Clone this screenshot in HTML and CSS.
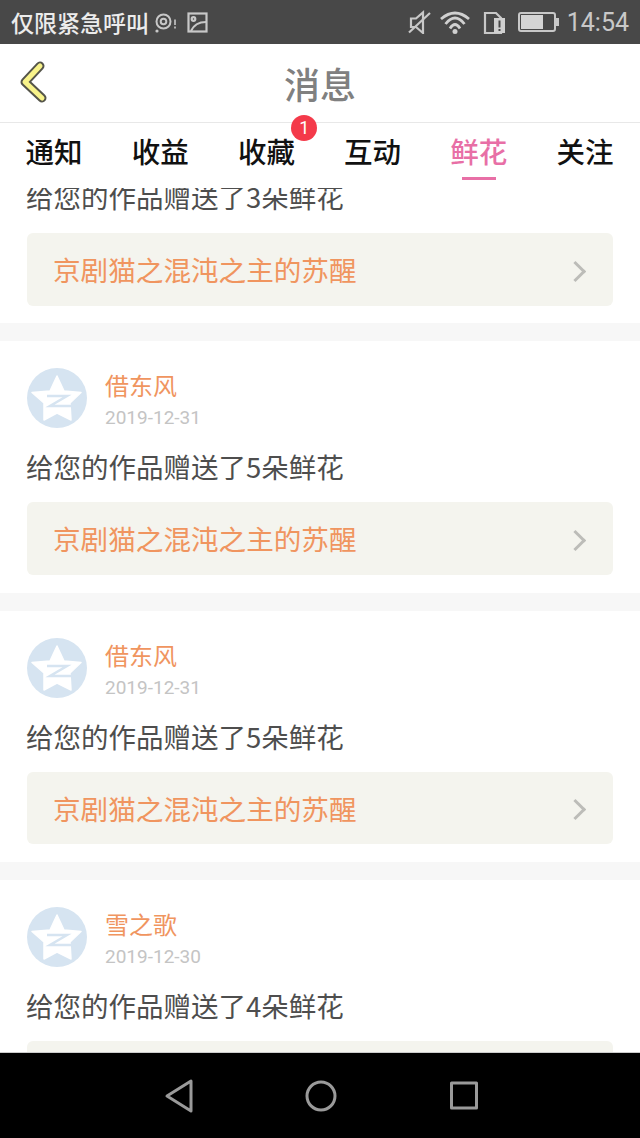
FILE: index.html
```html
<!DOCTYPE html>
<html lang="zh-CN">
<head>
    <meta charset="UTF-8">
    <meta name="viewport" content="width=device-width, initial-scale=1.0">
    <title>消息</title>
    <link rel="stylesheet" href="styles.css">
</head>
<body>
    <div class="app">
        <div class="status-bar">
            <div class="status-left">
                <span class="carrier">仅限紧急呼叫</span>
                <svg class="icon-nfc" width="24" height="24" viewBox="0 0 24 24" fill="none" stroke="#c8c8c8" stroke-width="2">
                    <circle cx="8.5" cy="11.500" r="7"/>
                    <circle cx="8.5" cy="11.500" r="2.800"/>
                    <path d="M20 9.500v5.500M20 16.500v2" stroke-width="1.600"/>
                    <circle cx="2" cy="21" r="1.600" fill="#c8c8c8" stroke="none"/>
                </svg>
                <svg class="icon-photo" width="21" height="21" viewBox="0 0 21 21" fill="none" stroke="#c8c8c8" stroke-width="2.200">
                    <rect x="1.500" y="1.500" width="18" height="18"/>
                    <path d="M4 19 Q8 10 19 10"/>
                    <circle cx="6.500" cy="7" r="1.800"/>
                </svg>
            </div>
            <div class="status-right">
                <svg class="icon-mute" width="24" height="24" viewBox="0 0 24 24" fill="none" stroke="#c8c8c8" stroke-width="2.200">
                    <path d="M1 22.500 L22 3"/>
                    <path d="M3 8.500 H8 L15 2.500 V23 L8 17 H3 Z"/>
                </svg>
                <svg class="icon-wifi" width="30" height="24" viewBox="0 0 30 24" fill="none" stroke="#d0d0d0" stroke-width="2.800">
                    <path d="M1 9 Q15 -3 29 9"/>
                    <path d="M5.500 14 Q15 2 24.500 14"/>
                    <path d="M10 18.500 Q15 10.500 20 18.500"/>
                    <circle cx="15" cy="21.500" r="2.500" fill="#d0d0d0" stroke="none"/>
                </svg>
                <svg class="icon-sim" width="24" height="24" viewBox="0 0 24 24">
                    <path d="M2 3h11l5 5v15H2z" fill="none" stroke="#c8c8c8" stroke-width="2.200"/>
                    <rect x="11" y="8" width="11" height="15" fill="#d0d0d0"/>
                    <rect x="15.500" y="10.500" width="2" height="7" fill="#484848"/>
                    <rect x="15.500" y="19" width="2" height="2" fill="#484848"/>
                </svg>
                <div class="battery"><div class="battery-level"></div></div>
                <span class="clock">14:54</span>
            </div>
        </div>

        <div class="header">
            <svg class="back" width="32" height="50" viewBox="0 0 32 50" fill="none" stroke-linecap="round" stroke-linejoin="round">
                <path d="M23 8 L8 24 L25 40" stroke="#55554a" stroke-width="9"/>
                <path d="M23 8 L8 24 L25 40" stroke="#f8f38a" stroke-width="5"/>
            </svg>
            <h1>消息</h1>
        </div>

        <div class="tabs">
            <div class="tab">通知</div>
            <div class="tab">收益</div>
            <div class="tab">收藏<span class="badge">1</span></div>
            <div class="tab">互动</div>
            <div class="tab active">鲜花</div>
            <div class="tab">关注</div>
        </div>

        <div class="list">
            <div class="card card-cut">
                <p class="msg">给您的作品赠送了3朵鲜花</p>
                <a class="work"><span>京剧猫之混沌之主的苏醒</span><i class="arrow"></i></a>
            </div>

            <div class="card">
                <div class="user">
                    <svg class="avatar" viewBox="0 0 60 60"><use href="#qq"/></svg>
                    <div class="user-info">
                        <div class="name">借东风</div>
                        <div class="date">2019-12-31</div>
                    </div>
                </div>
                <p class="msg">给您的作品赠送了5朵鲜花</p>
                <a class="work"><span>京剧猫之混沌之主的苏醒</span><i class="arrow"></i></a>
            </div>

            <div class="card">
                <div class="user">
                    <svg class="avatar" viewBox="0 0 60 60"><use href="#qq"/></svg>
                    <div class="user-info">
                        <div class="name">借东风</div>
                        <div class="date">2019-12-31</div>
                    </div>
                </div>
                <p class="msg">给您的作品赠送了5朵鲜花</p>
                <a class="work"><span>京剧猫之混沌之主的苏醒</span><i class="arrow"></i></a>
            </div>

            <div class="card">
                <div class="user">
                    <svg class="avatar" viewBox="0 0 60 60"><use href="#qq"/></svg>
                    <div class="user-info">
                        <div class="name">雪之歌</div>
                        <div class="date">2019-12-30</div>
                    </div>
                </div>
                <p class="msg">给您的作品赠送了4朵鲜花</p>
                <a class="work"><span>京剧猫之混沌之主的苏醒</span><i class="arrow"></i></a>
            </div>
        </div>

        <div class="nav-bar">
            <svg width="34" height="36" viewBox="0 0 34 36" fill="none" stroke="#9a9a9a" stroke-width="3" stroke-linejoin="round">
                <path d="M29 3 V33 L5 18 Z"/>
            </svg>
            <svg width="34" height="36" viewBox="0 0 34 36" fill="none" stroke="#9a9a9a" stroke-width="3">
                <circle cx="17" cy="18" r="14"/>
            </svg>
            <svg width="34" height="36" viewBox="0 0 34 36" fill="none" stroke="#9a9a9a" stroke-width="3" stroke-linejoin="round">
                <rect x="4.500" y="5" width="25" height="25"/>
            </svg>
        </div>
    </div>

    <svg width="0" height="0" class="defs">
        <symbol id="qq" viewBox="0 0 60 60">
            <circle cx="30" cy="30" r="30" fill="#d6e4f1"/>
            <path d="M30 8 L37 23 L54 24.500 L43 35 L44 52 L30 45 L17 52 L17 35 L5 24.500 L23 23 Z" fill="#fff" stroke="#fff" stroke-width="1.500" stroke-linejoin="round"/>
            <path d="M20 28 H40 L23 38 H44" fill="none" stroke="#d6e4f1" stroke-width="2.500"/>
        </symbol>
    </svg>
</body>
</html>
```

FILE: styles.css
```css
* {
    margin: 0;
    padding: 0;
    box-sizing: border-box;
}

body {
    font-family: "Noto Sans CJK SC", "Noto Sans", sans-serif;
    background: #fff;
}

.app {
    width: 640px;
    height: 1138px;
    display: flex;
    flex-direction: column;
    overflow: hidden;
}

.defs {
    position: absolute;
}

.status-bar {
    height: 44px;
    flex: none;
    background: #484848;
    color: #ececec;
    display: flex;
    align-items: center;
    justify-content: space-between;
    padding: 0 11px;
}

.status-left, .status-right {
    display: flex;
    align-items: center;
}

.carrier {
    font-size: 23px;
    font-weight: 500;
    line-height: 44px;
    width: 144px;
    white-space: nowrap;
}

.icon-photo {
    margin-left: 8px;
}

.icon-mute {
    margin-right: 8px;
}

.icon-wifi {
    margin-right: 13px;
}

.icon-sim {
    margin-right: 11px;
}

.battery {
    width: 38px;
    height: 20px;
    border: 2px solid #c8c8c8;
    border-radius: 3px;
    padding: 1px;
    margin-right: 11px;
    position: relative;
}

.battery::after {
    content: "";
    position: absolute;
    right: -5px;
    top: 4px;
    width: 3px;
    height: 8px;
    background: #c8c8c8;
}

.battery-level {
    width: 22px;
    height: 100%;
    background: #d4d4d4;
}

.clock {
    font-family: Roboto, sans-serif;
    font-size: 25px;
    color: #c8c8c8;
}

.header {
    height: 79px;
    flex: none;
    border-bottom: 1px solid #e8e8e8;
    display: flex;
    align-items: center;
    justify-content: center;
    position: relative;
}

.back {
    position: absolute;
    left: 17px;
    top: 14px;
}

h1 {
    font-size: 36px;
    font-weight: 500;
    color: #808080;
}

.tabs {
    height: 65px;
    flex: none;
    display: flex;
    padding: 0 2px 0 1px;
    background: #fff;
    position: relative;
    z-index: 1;
}

.tab {
    flex: 1;
    text-align: center;
    font-size: 28.500px;
    font-weight: 500;
    line-height: 56px;
    color: #111;
    position: relative;
}

.tab.active {
    color: #e86fa6;
}

.tab.active::after {
    content: "";
    position: absolute;
    left: 36px;
    right: 36px;
    top: 54px;
    height: 3px;
    background: #e86fa6;
}

.badge {
    position: absolute;
    left: 78px;
    top: -8px;
    width: 26px;
    height: 26px;
    border-radius: 50%;
    background: #f43a4a;
    color: #fff;
    font-family: Roboto, sans-serif;
    font-size: 18px;
    font-weight: 400;
    line-height: 26px;
    text-align: center;
}

.list {
    flex: 1;
    min-height: 0;
    overflow: hidden;
    background: #f7f7f7;
}

.card {
    background: #fff;
    padding: 27px 27px 18px;
    margin-bottom: 18px;
}

.card-cut {
    padding-top: 0;
    padding-bottom: 17.500px;
    margin-top: -12px;
}

.user {
    display: flex;
    align-items: flex-start;
    gap: 18px;
    height: 60px;
}

.avatar {
    width: 60px;
    height: 60px;
    flex: none;
}

.name {
    font-size: 24px;
    line-height: 34px;
    color: #f0955f;
}

.date {
    font-family: Roboto, sans-serif;
    font-size: 19px;
    line-height: 26px;
    margin-top: 3px;
    color: #c4c4c4;
}

.msg {
    font-size: 27.500px;
    line-height: 40px;
    color: #4e4e4e;
    margin: 18px 0 0 -1px;
}

.card-cut .msg {
    margin-top: 0;
}

.work {
    display: flex;
    align-items: center;
    justify-content: space-between;
    height: 72.500px;
    margin-top: 16px;
    padding: 0 27px 0 26px;
    background: #f4f4ee;
    border-radius: 6px;
    font-size: 27.600px;
    color: #f0955f;
}

.card-cut .work {
    margin-top: 17px;
}

.arrow {
    width: 15px;
    height: 15px;
    border-top: 3px solid #bcbcb8;
    border-right: 3px solid #bcbcb8;
    transform: rotate(45deg);
    margin: 4px 3px 0 0;
}

.nav-bar {
    height: 86px;
    flex: none;
    background: #000;
    border-top: 1px solid #ccc;
    display: flex;
    align-items: center;
    justify-content: center;
    gap: 108.500px;
    padding-left: 2px;
}
```
